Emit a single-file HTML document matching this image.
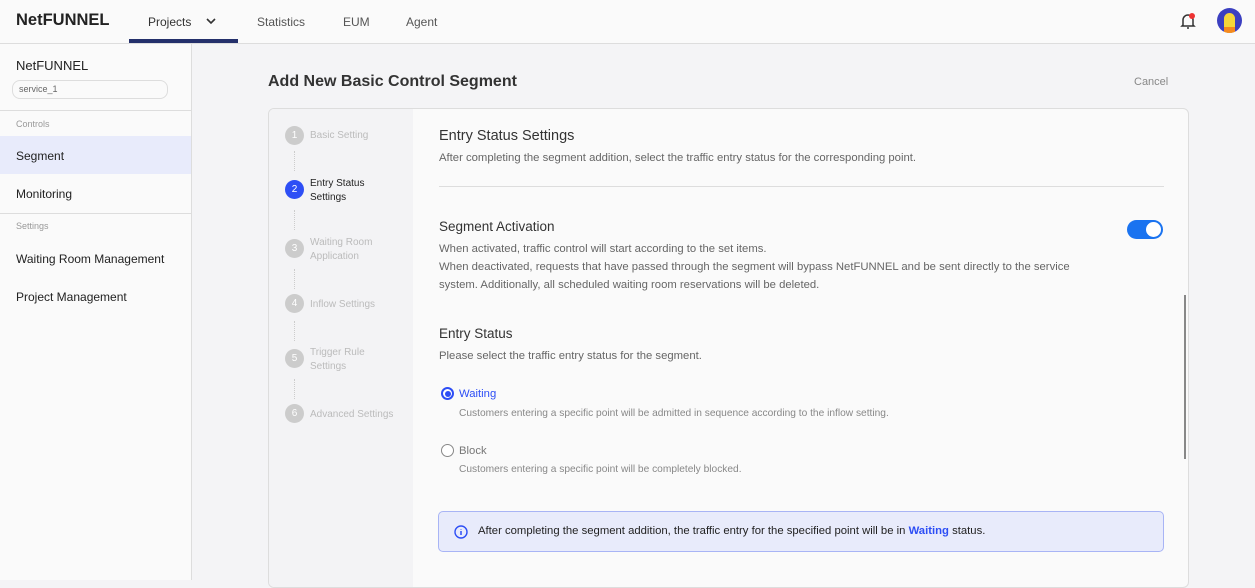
<!DOCTYPE html>
<html><head><meta charset="utf-8"><style>
*{box-sizing:border-box;margin:0;padding:0}
body{width:1255px;height:580px;overflow:hidden;font-family:"Liberation Sans",sans-serif;background:#f4f4f6;position:relative;color:#333}
.a{position:absolute}
.top{left:0;top:0;width:1255px;height:44px;background:#fafafa;border-bottom:1px solid #ddd}
.side{left:0;top:44px;width:192px;height:536px;background:#fafafa;border-right:1px solid #ddd}
.nav{font-size:12px;color:#555;top:15px}
.card{left:268px;top:108px;width:921px;height:480px;border:1px solid #ddd;border-radius:6px;background:#fafafa;overflow:hidden}
.steps{left:0;top:0;width:144px;height:480px;background:#f3f3f5}
.st{left:16px;width:19px;height:19px;border-radius:50%;background:#ccc;color:#fff;font-size:10px;text-align:center;line-height:19px}
.sl{left:41px;font-size:10px;color:#bbb;line-height:14px}
.dot{left:25px;width:0;border-left:1px dotted #ccc;height:20px}
.t{font-size:11.3px;color:#666}
</style></head><body>
<div class="a top">
<div class="a" style="left:16px;top:11px;font-size:16.5px;font-weight:bold;color:#222">NetFUNNEL</div>
<div class="a nav" style="left:148px;color:#333">Projects</div>
<svg class="a" style="left:206px;top:17px" width="10" height="8"><path d="M1 2l4 4 4-4" stroke="#333" stroke-width="1.6" fill="none"/></svg>
<div class="a" style="left:129px;top:39px;width:109px;height:4px;background:#24306b"></div>
<div class="a nav" style="left:257px">Statistics</div>
<div class="a nav" style="left:343px">EUM</div>
<div class="a nav" style="left:406px">Agent</div>
<svg class="a" style="left:1179px;top:11px" width="18" height="20"><path d="M4 14V9a5 5 0 0 1 10 0v5l1 1H3z M8 17h2" stroke="#333" stroke-width="1.5" fill="none"/><circle cx="13" cy="5" r="3" fill="#e33"/></svg>
<div class="a" style="left:1217px;top:8px;width:25px;height:25px;border-radius:50%;background:#3b3fc0;overflow:hidden"><div class="a" style="left:7px;top:5px;width:11px;height:20px;border-radius:6px 6px 0 0;background:#f5d63a"></div><div class="a" style="left:7px;top:19px;width:11px;height:6px;background:#f58a1f"></div></div>
</div>
<div class="a side">
<div class="a" style="left:16px;top:14px;font-size:13px;color:#222">NetFUNNEL</div>
<div class="a" style="left:12px;top:36px;width:156px;height:19px;border:1px solid #ddd;border-radius:8px;font-size:9px;color:#666;padding:3px 6px">service_1</div>
<div class="a" style="left:0;top:66px;width:191px;border-top:1px solid #ddd"></div>
<div class="a" style="left:16px;top:75px;font-size:9px;color:#999">Controls</div>
<div class="a" style="left:0;top:92px;width:191px;height:38px;background:#e8ebfb"></div>
<div class="a" style="left:16px;top:105px;font-size:12px;color:#222">Segment</div>
<div class="a" style="left:16px;top:143px;font-size:12px;color:#222">Monitoring</div>
<div class="a" style="left:0;top:169px;width:191px;border-top:1px solid #ddd"></div>
<div class="a" style="left:16px;top:177px;font-size:9px;color:#999">Settings</div>
<div class="a" style="left:16px;top:208px;font-size:12px;color:#222">Waiting Room Management</div>
<div class="a" style="left:16px;top:246px;font-size:12px;color:#222">Project Management</div>
</div>
<div class="a" style="left:268px;top:73px;font-size:16px;font-weight:bold;color:#333">Add New Basic Control Segment</div>
<div class="a" style="left:1134px;top:76px;font-size:11px;color:#888">Cancel</div>
<div class="a card">
<div class="a steps">
<div class="a st" style="top:17px">1</div><div class="a sl" style="top:20px">Basic Setting</div>
<div class="a dot" style="top:42px"></div>
<div class="a st" style="top:71px;background:#2d4ef5">2</div><div class="a sl" style="top:68px;color:#222">Entry Status<br>Settings</div>
<div class="a dot" style="top:101px"></div>
<div class="a st" style="top:130px">3</div><div class="a sl" style="top:127px">Waiting Room<br>Application</div>
<div class="a dot" style="top:160px"></div>
<div class="a st" style="top:185px">4</div><div class="a sl" style="top:189px">Inflow Settings</div>
<div class="a dot" style="top:212px"></div>
<div class="a st" style="top:240px">5</div><div class="a sl" style="top:237px">Trigger Rule<br>Settings</div>
<div class="a dot" style="top:270px"></div>
<div class="a st" style="top:295px">6</div><div class="a sl" style="top:299px">Advanced Settings</div>
</div>
<div class="a" style="left:170px;top:19px;font-size:14.5px;color:#333">Entry Status Settings</div>
<div class="a t" style="left:170px;top:43px">After completing the segment addition, select the traffic entry status for the corresponding point.</div>
<div class="a" style="left:170px;top:77px;width:725px;border-top:1px solid #ddd"></div>
<div class="a" style="left:170px;top:110px;font-size:13.5px;color:#333">Segment Activation</div>
<div class="a t" style="left:170px;top:131px;line-height:18px">When activated, traffic control will start according to the set items.<br>When deactivated, requests that have passed through the segment will bypass NetFUNNEL and be sent directly to the service<br>system. Additionally, all scheduled waiting room reservations will be deleted.</div>
<div class="a" style="left:858px;top:111px;width:36px;height:19px;border-radius:10px;background:#1a73f0"><div class="a" style="left:19px;top:2px;width:15px;height:15px;border-radius:50%;background:#fff"></div></div>
<div class="a" style="left:915px;top:186px;width:2px;height:164px;background:#888"></div>
<div class="a" style="left:170px;top:217px;font-size:13.5px;color:#333">Entry Status</div>
<div class="a t" style="left:170px;top:241px">Please select the traffic entry status for the segment.</div>
<div class="a" style="left:172px;top:278px;width:13px;height:13px;border-radius:50%;border:2px solid #2d4ef5;background:#fff"><div class="a" style="left:1.5px;top:1.5px;width:6px;height:6px;border-radius:50%;background:#2d4ef5"></div></div>
<div class="a" style="left:190px;top:279px;font-size:11.3px;color:#2d4ef5">Waiting</div>
<div class="a" style="left:190px;top:299px;font-size:10.2px;color:#888">Customers entering a specific point will be admitted in sequence according to the inflow setting.</div>
<div class="a" style="left:172px;top:335px;width:13px;height:13px;border-radius:50%;border:1px solid #888;background:#fff"></div>
<div class="a" style="left:190px;top:336px;font-size:11.3px;color:#777">Block</div>
<div class="a" style="left:190px;top:355px;font-size:10.2px;color:#888">Customers entering a specific point will be completely blocked.</div>
<div class="a" style="left:169px;top:402px;width:726px;height:41px;border:1px solid #a8b4f5;border-radius:5px;background:#e8ebfb"></div>
<svg class="a" style="left:185px;top:416px" width="14" height="14"><circle cx="7" cy="7" r="6" stroke="#2d4ef5" stroke-width="1.4" fill="none"/><path d="M7 6v4M7 4v.5" stroke="#2d4ef5" stroke-width="1.5"/></svg>
<div class="a" style="left:209px;top:416px;font-size:11.3px;color:#222">After completing the segment addition, the traffic entry for the specified point will be in <b style="color:#2d4ef5;font-weight:600">Waiting</b> status.</div>
</div>
</body></html>
